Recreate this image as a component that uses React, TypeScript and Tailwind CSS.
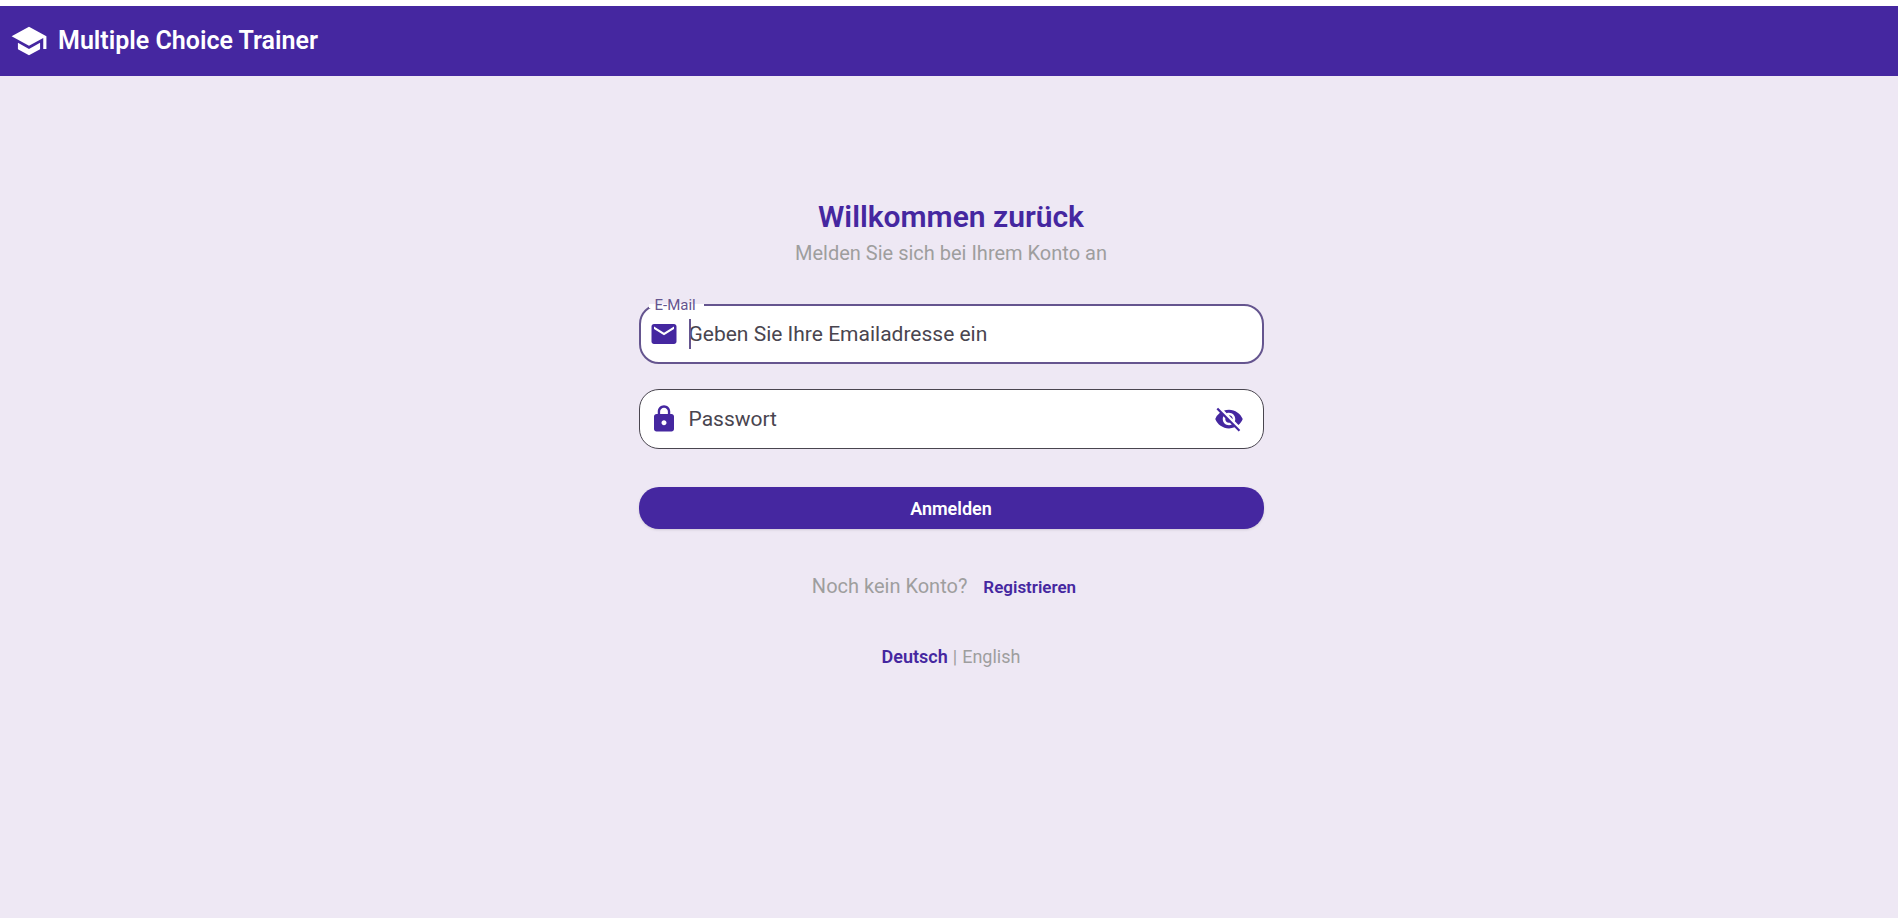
import { useState } from 'react';
import { MdEmail, MdLock, MdSchool, MdVisibility, MdVisibilityOff } from 'react-icons/md';

type Language = 'de' | 'en';

function Header() {
  return (
    <header className="flex h-[76px] items-center gap-2.5 border-t-6 border-white bg-[#4527a0] px-2.5 text-white">
      <MdSchool size={38} aria-hidden="true" />
      <span className="text-[25px] font-semibold">Multiple Choice Trainer</span>
    </header>
  );
}

function EmailField() {
  const [email, setEmail] = useState('');
  return (
    <div className="relative flex h-15 items-center rounded-[20px] border-2 border-[#65558f] bg-white px-2">
      <label
        htmlFor="email"
        className="absolute -top-2.5 left-2 pr-2 pl-1.5 text-[15px] leading-[18px] text-[#65558f] before:absolute before:inset-x-0 before:top-2 before:h-1 before:bg-white"
      >
        <span className="relative">E-Mail</span>
      </label>
      <MdEmail size={30} className="shrink-0 text-[#4527a0]" aria-hidden="true" />
      <div className="relative ml-2.5 flex flex-1">
        <input
          id="email"
          type="email"
          value={email}
          onChange={(event) => setEmail(event.target.value)}
          placeholder="Geben Sie Ihre Emailadresse ein"
          className="w-full bg-transparent text-[21px] leading-[30px] text-[#1d1b20] outline-none placeholder:text-[#49454f]"
        />
        {email === '' && <span className="absolute top-0 left-0 h-[30px] w-0.5 bg-[#65558f]" />}
      </div>
    </div>
  );
}

function PasswordField() {
  const [visible, setVisible] = useState(false);
  return (
    <div className="flex h-15 items-center rounded-[20px] border border-[#49454f] bg-white pr-[19px] pl-[9px]">
      <MdLock size={30} className="shrink-0 text-[#4527a0]" aria-hidden="true" />
      <input
        type={visible ? 'text' : 'password'}
        aria-label="Passwort"
        placeholder="Passwort"
        className="ml-2.5 min-w-0 flex-1 bg-transparent text-[21px] leading-[30px] text-[#1d1b20] outline-none placeholder:text-[#49454f]"
      />
      <button
        type="button"
        aria-label="Passwort anzeigen"
        onClick={() => setVisible(!visible)}
        className="text-[#4527a0]"
      >
        {visible ? <MdVisibility size={30} /> : <MdVisibilityOff size={30} />}
      </button>
    </div>
  );
}

function LanguageSwitch() {
  const [language, setLanguage] = useState<Language>('de');
  const active = 'font-semibold text-[#4527a0]';
  const inactive = 'text-[#9e9e9e]';
  return (
    <div className="mt-[43px] flex gap-[5px] text-[18px] leading-6">
      <button type="button" className={language === 'de' ? active : inactive} onClick={() => setLanguage('de')}>
        Deutsch
      </button>
      <span className="text-[#9e9e9e]">|</span>
      <button type="button" className={language === 'en' ? active : inactive} onClick={() => setLanguage('en')}>
        English
      </button>
    </div>
  );
}

export default function App() {
  return (
    <div className="flex min-h-screen flex-col bg-[#eee8f4] font-['Roboto',sans-serif]">
      <Header />
      <main className="flex flex-1 flex-col items-center pt-[123px] pl-1">
        <h1 className="text-[30px] leading-9 font-semibold text-[#4527a0]">Willkommen zurück</h1>
        <p className="text-[20px] leading-9 text-[#9e9e9e]">Melden Sie sich bei Ihrem Konto an</p>
        <form className="mt-[33px] flex w-full max-w-[625px] flex-col" onSubmit={(event) => event.preventDefault()}>
          <EmailField />
          <div className="mt-[25px]">
            <PasswordField />
          </div>
          <button
            type="submit"
            className="mt-[38px] h-[42px] rounded-[20px] bg-[#4527a0] text-[18px] font-semibold text-white shadow-sm"
          >
            Anmelden
          </button>
        </form>
        <p className="mt-[42px] flex items-baseline gap-4 pr-3.5 text-[20px] leading-[30px] text-[#9e9e9e]">
          Noch kein Konto?
          <a href="#registrieren" className="text-[17px] font-semibold text-[#4527a0]">
            Registrieren
          </a>
        </p>
        <LanguageSwitch />
      </main>
    </div>
  );
}
